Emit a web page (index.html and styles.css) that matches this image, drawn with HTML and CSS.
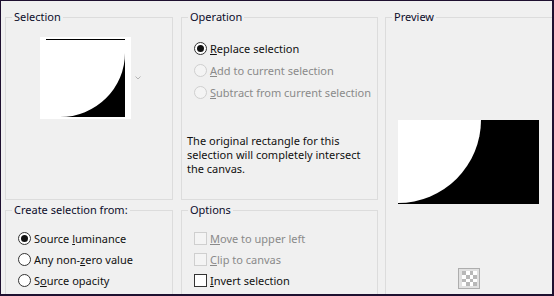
FILE: index.html
```html
<!DOCTYPE html>
<html lang="en">
<head>
    <meta charset="UTF-8">
    <title>Selection from Mask</title>
    <link rel="stylesheet" href="styles.css">
</head>
<body>
    <div class="dialog">
        <!-- Selection thumbnail -->
        <fieldset class="group">
            <legend>Selection</legend>
            <div class="thumb-row">
                <svg class="thumb" width="91" height="82" viewBox="0 0 91 82">
                    <rect width="91" height="82" fill="#fff"/>
                    <line x1="6" y1="2.5" x2="85" y2="2.5" stroke="#000" stroke-width="1"/>
                    <path d="M85 16 A65 64 0 0 1 20 80 L85 80 Z" fill="#000"/>
                </svg>
                <svg class="drop" width="6" height="4" viewBox="0 0 6 4">
                    <path d="M0.5 0.5 L3 3 L5.5 0.5" fill="none" stroke="#b4b4b4" stroke-width="1"/>
                </svg>
            </div>
        </fieldset>

        <fieldset class="group">
            <legend>Operation</legend>
            <div class="choices">
                <label class="choice"><span class="radio checked"></span><span><u>R</u>eplace selection</span></label>
                <label class="choice disabled"><span class="radio"></span><span><u>A</u>dd to current selection</span></label>
                <label class="choice disabled"><span class="radio"></span><span><u>S</u>ubtract from current selection</span></label>
            </div>
            <p class="note">The original rectangle for this selection will completely intersect the canvas.</p>
        </fieldset>

        <fieldset class="group preview">
            <legend>Preview</legend>
            <svg class="preview-img" width="141" height="84" viewBox="0 0 141 84">
                <rect width="141" height="84" fill="#000"/>
                <path d="M0 0 L83 0 A83 83 0 0 1 0 83 Z" fill="#fff"/>
            </svg>
            <div class="checker-row">
                <span class="checker-btn">
                    <svg width="15" height="15" viewBox="0 0 4 4" shape-rendering="crispEdges">
                        <rect width="4" height="4" fill="#fff"/>
                        <path d="M0 0h1v1H0zM2 0h1v1H2zM1 1h1v1H1zM3 1h1v1H3zM0 2h1v1H0zM2 2h1v1H2zM1 3h1v1H1zM3 3h1v1H3z" fill="#b8b8b8"/>
                    </svg>
                </span>
            </div>
        </fieldset>

        <fieldset class="group bottom">
            <legend>Create selection from:</legend>
            <div class="choices tight">
                <label class="choice"><span class="radio checked"></span><span>Source <u>l</u>uminance</span></label>
                <label class="choice"><span class="radio"></span><span>Any non-<u>z</u>ero value</span></label>
                <label class="choice"><span class="radio"></span><span>S<u>o</u>urce opacity</span></label>
            </div>
        </fieldset>

        <fieldset class="group bottom">
            <legend>Options</legend>
            <div class="choices tight">
                <label class="choice disabled"><span class="check"></span><span><u>M</u>ove to upper left</span></label>
                <label class="choice disabled"><span class="check"></span><span><u>C</u>lip to canvas</span></label>
                <label class="choice"><span class="check"></span><span><u>I</u>nvert selection</span></label>
            </div>
        </fieldset>
    </div>
</body>
</html>
```

FILE: styles.css
```css
/* Dialog frame */
body {
    margin: 0;
    background: #f0f0f0;
    font-family: "Noto Sans", sans-serif;
    font-size: 11px;
    color: #111;
}

.dialog {
    box-sizing: border-box;
    width: 554px;
    height: 296px;
    border: solid #1e1030;
    border-width: 1px 2px 2px 1px;
    background: #f0f0f0;
    overflow: hidden;
    display: grid;
    grid-template-columns: 168px 197px 1fr;
    grid-template-rows: 191px 120px;
    column-gap: 8px;
    row-gap: 2px;
    padding: 8px 0 0 4px;
}

/* Group boxes */
.group {
    margin: 0;
    padding: 0;
    min-width: 0;
    border: 1px solid #dcdcdc;
}

.group legend {
    margin-left: 6px;
    padding: 0 2px;
    line-height: 16px;
    font-size: 11px;
    color: #0c0c2a;
}

.preview {
    grid-column: 3;
    grid-row: 1 / 3;
    margin: 0 -20px 0 -1px;
}

.bottom {
    height: 110px;
}

/* Selection thumbnail */
.thumb-row {
    display: flex;
    align-items: flex-start;
    margin: 12px 0 0 34px;
}

.thumb {
    display: block;
}

.drop {
    margin: 39px 0 0 4px;
}

/* Radio and checkbox rows */
.choices {
    display: flex;
    flex-direction: column;
    padding: 12px 0 0 12px;
}

.choices.tight {
    padding-top: 10px;
}

.choice {
    display: flex;
    align-items: center;
    height: 22px;
    gap: 3px;
}

.tight .choice {
    height: 21px;
}

.bottom:first-of-type .choices {
    padding-left: 18px;
}

.radio {
    box-sizing: border-box;
    width: 13px;
    height: 13px;
    border: 1px solid #333;
    border-radius: 50%;
    background: #fff;
    display: flex;
    align-items: center;
    justify-content: center;
}

.radio.checked::after {
    content: "";
    width: 7px;
    height: 7px;
    border-radius: 50%;
    background: #111;
}

.check {
    box-sizing: border-box;
    width: 13px;
    height: 13px;
    border: 1px solid #333;
    background: #fff;
}

.disabled {
    color: #8a8a8a;
}

.disabled .radio,
.disabled .check {
    border-color: #cfcfcf;
    background: #f4f4f4;
}

.note {
    margin: 31px 0 0 5px;
    line-height: 14px;
    width: 180px;
}

/* Preview */
.preview-img {
    display: block;
    margin: 95px 0 0 12px;
}

.checker-row {
    margin: 64px 0 0 72px;
}

.checker-btn {
    box-sizing: border-box;
    width: 22px;
    height: 21px;
    border: 1px solid #adadad;
    background: #e1e1e1;
    display: flex;
    align-items: center;
    justify-content: center;
}
```
